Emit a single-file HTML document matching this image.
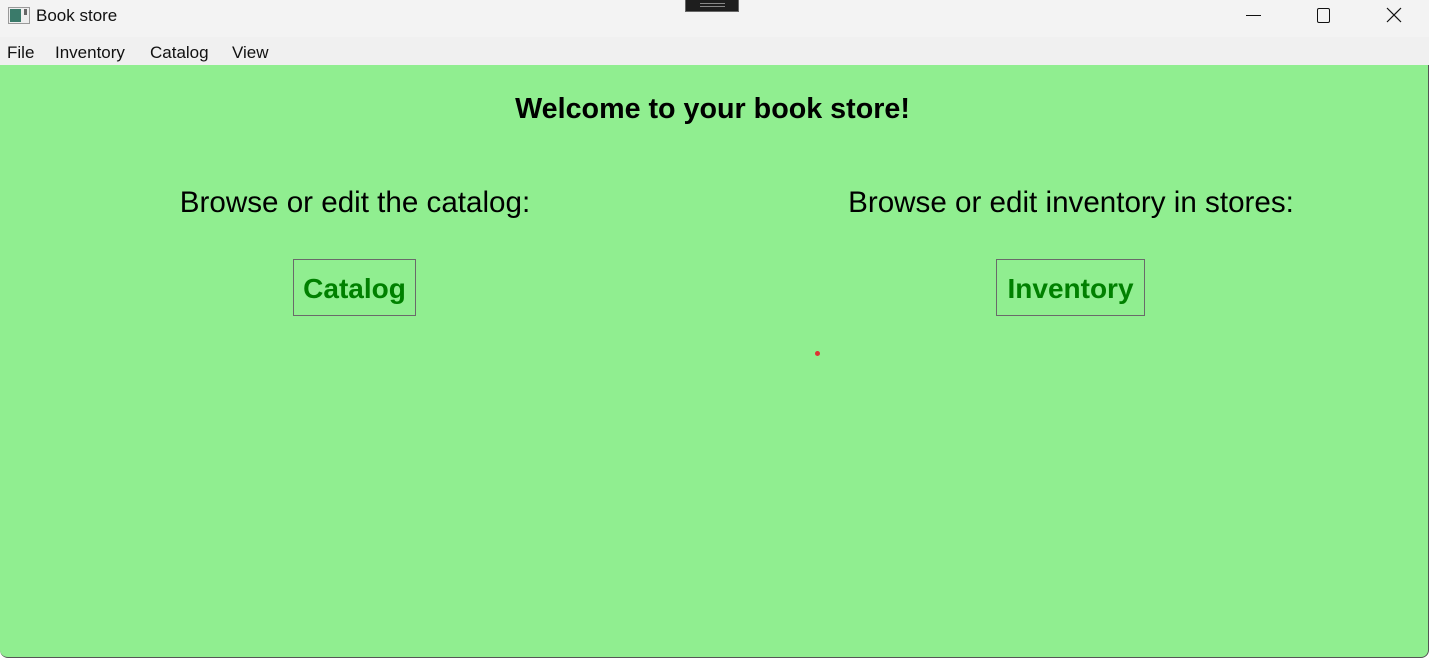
<!DOCTYPE html>
<html><head><style>
*{margin:0;padding:0;box-sizing:border-box}
body{width:1429px;height:658px;overflow:hidden;background:#fff;font-family:"Liberation Sans",sans-serif;position:relative}
.tb{position:absolute;left:0;top:0;width:1429px;height:37px;background:#f3f3f3}
.mb{position:absolute;left:0;top:37px;width:1429px;height:28px;background:#f0f0f0}
.g{position:absolute;left:0;top:65px;width:1429px;height:593px;background:#90ee90;border-radius:0 0 8px 8px;border-right:1px solid #555;border-bottom:1px solid #555}
.t{position:absolute;white-space:nowrap}
.btn{position:absolute;border:1px solid #6a6a6a;color:#008000;font-weight:bold;font-size:28px;display:flex;align-items:center;justify-content:center;padding-top:3px}
</style></head><body>
<div class="tb"></div>
<div class="mb"></div>
<svg style="position:absolute;left:8px;top:7px" width="22" height="18"><rect x="0.5" y="0.5" width="21" height="16" fill="#eee" stroke="#999"/><rect x="2" y="2" width="11" height="13" fill="#3a7a6a"/><rect x="16" y="2" width="3" height="6" fill="#666"/></svg>
<div class="t" style="left:36px;top:6px;font-size:17px;color:#111">Book store</div>
<div style="position:absolute;left:685px;top:0;width:54px;height:12px;background:#1e1e1e;border:1px solid #666;border-top:none"></div>
<div style="position:absolute;left:700px;top:3px;width:25px;height:1px;background:#888"></div>
<div style="position:absolute;left:700px;top:6px;width:25px;height:1px;background:#888"></div>
<div style="position:absolute;left:1246px;top:15px;width:15px;height:1px;background:#111"></div>
<div style="position:absolute;left:1317px;top:8px;width:13px;height:15px;border:1px solid #111;border-radius:2px"></div>
<svg style="position:absolute;left:1386px;top:7px" width="16" height="16"><path d="M1 1L15 15M15 1L1 15" stroke="#111" stroke-width="1.2"/></svg>
<div class="t" style="left:7px;top:43px;font-size:17px;color:#111">File</div>
<div class="t" style="left:55px;top:43px;font-size:17px;color:#111">Inventory</div>
<div class="t" style="left:150px;top:43px;font-size:17px;color:#111">Catalog</div>
<div class="t" style="left:232px;top:43px;font-size:17px;color:#111">View</div>
<div class="g"></div>
<div class="t" style="left:0;width:1425px;text-align:center;top:93px;font-size:28.7px;font-weight:bold;color:#000">Welcome to your book store!</div>
<div class="t" style="left:105px;width:500px;text-align:center;top:186px;font-size:29.6px;color:#000">Browse or edit the catalog:</div>
<div class="t" style="left:771px;width:600px;text-align:center;top:186px;font-size:29.6px;color:#000">Browse or edit inventory in stores:</div>
<div class="btn" style="left:293px;top:259px;width:123px;height:57px">Catalog</div>
<div class="btn" style="left:996px;top:259px;width:149px;height:57px">Inventory</div>
<div style="position:absolute;left:815px;top:351px;width:5px;height:5px;border-radius:50%;background:#d33"></div>
</body></html>
